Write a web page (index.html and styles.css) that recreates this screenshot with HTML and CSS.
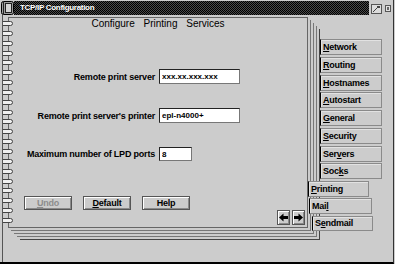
FILE: index.html
```html
<!DOCTYPE html>
<html lang="en">
<head>
<meta charset="UTF-8">
<meta name="viewport" content="width=device-width, initial-scale=1.0">
<title>TCP/IP Configuration</title>
<link rel="stylesheet" href="styles.css">
</head>
<body>

<div class="window">

<div class="titlebar">
<svg class="sysicon" width="13" height="14" viewBox="0 0 13 14">
<rect x="0.5" y="0.5" width="12" height="13" rx="2" fill="#9c9c9c" stroke="#000"/>
<rect x="4.5" y="2.5" width="6" height="9" fill="#d4d4d4" stroke="#222"/>
<line x1="2.5" y1="1" x2="2.5" y2="13" stroke="#222"/>
</svg>
<div class="caption">TCP/IP Configuration</div>
<div class="winbtns">
<svg width="11" height="10" viewBox="0 0 11 10">
<rect x="0.5" y="0.5" width="10" height="9" fill="#dcdcdc" stroke="#555"/>
<line x1="2" y1="8" x2="8" y2="2" stroke="#444"/>
<rect x="6" y="2" width="3" height="2" fill="#444"/>
</svg>
<svg width="6" height="7" viewBox="0 0 6 7">
<rect x="0.5" y="0.5" width="5" height="6" fill="#e0e0e0" stroke="#555"/>
<rect x="2" y="2" width="2" height="3" fill="#666"/>
</svg>
</div>
</div>

<div class="client">

<div class="rings">
<svg class="ring" width="10" height="5" viewBox="0 0 10 5"><path d="M0 0.5H7.5Q9.5 0.5 9.5 2.5Q9.5 4.5 7.5 4.5H0" fill="#f0f0f0" stroke="#444"/></svg>
<svg class="ring" width="10" height="5" viewBox="0 0 10 5"><path d="M0 0.5H7.5Q9.5 0.5 9.5 2.5Q9.5 4.5 7.5 4.5H0" fill="#f0f0f0" stroke="#444"/></svg>
<svg class="ring" width="10" height="5" viewBox="0 0 10 5"><path d="M0 0.5H7.5Q9.5 0.5 9.5 2.5Q9.5 4.5 7.5 4.5H0" fill="#f0f0f0" stroke="#444"/></svg>
<svg class="ring" width="10" height="5" viewBox="0 0 10 5"><path d="M0 0.5H7.5Q9.5 0.5 9.5 2.5Q9.5 4.5 7.5 4.5H0" fill="#f0f0f0" stroke="#444"/></svg>
<svg class="ring" width="10" height="5" viewBox="0 0 10 5"><path d="M0 0.5H7.5Q9.5 0.5 9.5 2.5Q9.5 4.5 7.5 4.5H0" fill="#f0f0f0" stroke="#444"/></svg>
<svg class="ring" width="10" height="5" viewBox="0 0 10 5"><path d="M0 0.5H7.5Q9.5 0.5 9.5 2.5Q9.5 4.5 7.5 4.5H0" fill="#f0f0f0" stroke="#444"/></svg>
<svg class="ring" width="10" height="5" viewBox="0 0 10 5"><path d="M0 0.5H7.5Q9.5 0.5 9.5 2.5Q9.5 4.5 7.5 4.5H0" fill="#f0f0f0" stroke="#444"/></svg>
<svg class="ring" width="10" height="5" viewBox="0 0 10 5"><path d="M0 0.5H7.5Q9.5 0.5 9.5 2.5Q9.5 4.5 7.5 4.5H0" fill="#f0f0f0" stroke="#444"/></svg>
<svg class="ring" width="10" height="5" viewBox="0 0 10 5"><path d="M0 0.5H7.5Q9.5 0.5 9.5 2.5Q9.5 4.5 7.5 4.5H0" fill="#f0f0f0" stroke="#444"/></svg>
<svg class="ring" width="10" height="5" viewBox="0 0 10 5"><path d="M0 0.5H7.5Q9.5 0.5 9.5 2.5Q9.5 4.5 7.5 4.5H0" fill="#f0f0f0" stroke="#444"/></svg>
<svg class="ring" width="10" height="5" viewBox="0 0 10 5"><path d="M0 0.5H7.5Q9.5 0.5 9.5 2.5Q9.5 4.5 7.5 4.5H0" fill="#f0f0f0" stroke="#444"/></svg>
<svg class="ring" width="10" height="5" viewBox="0 0 10 5"><path d="M0 0.5H7.5Q9.5 0.5 9.5 2.5Q9.5 4.5 7.5 4.5H0" fill="#f0f0f0" stroke="#444"/></svg>
<svg class="ring" width="10" height="5" viewBox="0 0 10 5"><path d="M0 0.5H7.5Q9.5 0.5 9.5 2.5Q9.5 4.5 7.5 4.5H0" fill="#f0f0f0" stroke="#444"/></svg>
<svg class="ring" width="10" height="5" viewBox="0 0 10 5"><path d="M0 0.5H7.5Q9.5 0.5 9.5 2.5Q9.5 4.5 7.5 4.5H0" fill="#f0f0f0" stroke="#444"/></svg>
<svg class="ring" width="10" height="5" viewBox="0 0 10 5"><path d="M0 0.5H7.5Q9.5 0.5 9.5 2.5Q9.5 4.5 7.5 4.5H0" fill="#f0f0f0" stroke="#444"/></svg>
<svg class="ring" width="10" height="5" viewBox="0 0 10 5"><path d="M0 0.5H7.5Q9.5 0.5 9.5 2.5Q9.5 4.5 7.5 4.5H0" fill="#f0f0f0" stroke="#444"/></svg>
<svg class="ring" width="10" height="5" viewBox="0 0 10 5"><path d="M0 0.5H7.5Q9.5 0.5 9.5 2.5Q9.5 4.5 7.5 4.5H0" fill="#f0f0f0" stroke="#444"/></svg>
<svg class="ring" width="10" height="5" viewBox="0 0 10 5"><path d="M0 0.5H7.5Q9.5 0.5 9.5 2.5Q9.5 4.5 7.5 4.5H0" fill="#f0f0f0" stroke="#444"/></svg>
<svg class="ring" width="10" height="5" viewBox="0 0 10 5"><path d="M0 0.5H7.5Q9.5 0.5 9.5 2.5Q9.5 4.5 7.5 4.5H0" fill="#f0f0f0" stroke="#444"/></svg>
<svg class="ring" width="10" height="5" viewBox="0 0 10 5"><path d="M0 0.5H7.5Q9.5 0.5 9.5 2.5Q9.5 4.5 7.5 4.5H0" fill="#f0f0f0" stroke="#444"/></svg>
<svg class="ring" width="10" height="5" viewBox="0 0 10 5"><path d="M0 0.5H7.5Q9.5 0.5 9.5 2.5Q9.5 4.5 7.5 4.5H0" fill="#f0f0f0" stroke="#444"/></svg>
</div>

<div class="page">

<div class="pagetitle">Configure Printing Services</div>

<div class="form">
<label for="server">Remote print server</label>
<input class="field" id="server" value="xxx.xx.xxx.xxx" readonly>

<label for="printer">Remote print server's printer</label>
<input class="field" id="printer" value="epl-n4000+" readonly>

<label for="ports">Maximum number of LPD ports</label>
<input class="field short" id="ports" value="8" readonly>
</div>

<div class="buttons">
<div class="btn disabled"><u>U</u>ndo</div>
<div class="btn"><u>D</u>efault</div>
<div class="btn">Help</div>
</div>

<div class="arrows">
<div class="arrow">
<svg width="9" height="9" viewBox="0 0 9 9"><path d="M0 4.5L4.5 0.5V3H9V6H4.5V8.5Z" fill="#000"/></svg>
</div>
<div class="arrow">
<svg width="9" height="9" viewBox="0 0 9 9"><path d="M9 4.5L4.5 0.5V3H0V6H4.5V8.5Z" fill="#000"/></svg>
</div>
</div>

</div>

<div class="tabs">
<div class="tab"><span><u>N</u>etwork</span></div>
<div class="tab"><span><u>R</u>outing</span></div>
<div class="tab"><span><u>H</u>ostnames</span></div>
<div class="tab"><span><u>A</u>utostart</span></div>
<div class="tab"><span><u>G</u>eneral</span></div>
<div class="tab"><span><u>S</u>ecurity</span></div>
<div class="tab"><span>Ser<u>v</u>ers</span></div>
<div class="tab"><span>Soc<u>k</u>s</span></div>
<div class="tab back printing"><span><u>P</u>rinting</span></div>
<div class="tab back mail"><span>Mai<u>l</u></span></div>
<div class="tab back sendmail"><span>S<u>e</u>ndmail</span></div>
</div>

</div>

</div>

</body>
</html>
```

FILE: styles.css
```css
body{
margin:0;
background:#cccccc;
font-family:"Liberation Sans", Arial, sans-serif;
color:#000;
}

.window{
width:394px;
height:264px;
box-sizing:border-box;
border-right:1px solid #333;
border-bottom:2px solid #000;
display:flex;
flex-direction:column;
}

/* title bar */

.titlebar{
display:flex;
height:14px;
margin:1px 0 0 1px;
}

.sysicon{
display:block;
}

.caption{
flex:1;
background:repeating-conic-gradient(#000 0 25%, #4a4a4a 0 50%) 0 0/2px 2px;
color:#fff;
font-weight:bold;
font-size:8px;
letter-spacing:-0.3px;
line-height:14px;
padding-left:6px;
white-space:nowrap;
}

.winbtns{
width:24px;
box-sizing:border-box;
display:flex;
align-items:flex-start;
gap:3px;
padding:3px 0 0 2px;
}

.winbtns svg{
display:block;
}

.winbtns svg + svg{
margin-top:1px;
}

/* notebook */

.client{
flex:1;
display:flex;
align-items:flex-start;
margin-left:2px;
border-left:1px solid #555;
}

.rings{
position:relative;
z-index:1;
width:5px;
height:202px;
margin-top:6px;
display:flex;
flex-direction:column;
justify-content:space-between;
}

.ring{
display:block;
flex-shrink:0;
}

.page{
width:300px;
height:211px;
margin-top:2px;
box-sizing:border-box;
border:1px solid #666;
display:flex;
flex-direction:column;
flex-shrink:0;
box-shadow:
2px 2px 0 #ccc, 3px 3px 0 #777,
5px 5px 0 #ccc, 6px 6px 0 #777,
8px 8px 0 #ccc, 9px 9px 0 #777,
11px 11px 0 #ccc, 12px 12px 0 #444;
}

.pagetitle{
height:12px;
line-height:12px;
font-size:10px;
word-spacing:6px;
text-align:center;
}

.form{
display:grid;
grid-template-columns:146px auto;
column-gap:4px;
row-gap:24px;
margin-top:39px;
align-items:center;
justify-content:start;
}

.form label{
font-size:9px;
letter-spacing:-0.2px;
font-weight:bold;
text-align:right;
white-space:nowrap;
}

.field{
width:81px;
height:15px;
box-sizing:border-box;
margin:0;
padding:0 2px;
border:1px solid #777;
border-top-color:#222;
border-left-color:#222;
border-radius:0;
background:#fff;
font-family:"Liberation Sans", Arial, sans-serif;
font-size:8px;
font-weight:bold;
color:#000;
outline:none;
}

.short{
width:33px;
height:14px;
}

.buttons{
display:flex;
gap:11px;
margin:35px 0 0 15px;
}

.btn{
width:48px;
height:14px;
box-sizing:border-box;
border:1px solid #555;
box-shadow:inset 1px 1px #fff, inset -1px -1px #8a8a8a;
display:flex;
align-items:center;
justify-content:center;
font-size:9px;
letter-spacing:-0.2px;
font-weight:bold;
}

.disabled{
color:#8c8c8c;
}

.arrows{
display:flex;
justify-content:flex-end;
gap:2px;
padding-right:2px;
}

.arrow{
width:13px;
height:15px;
box-sizing:border-box;
border:1px solid #555;
box-shadow:inset 1px 1px #fff, inset -1px -1px #8a8a8a;
display:flex;
align-items:center;
justify-content:center;
}

.arrow svg{
display:block;
}

/* tabs */

.tabs{
display:flex;
flex-direction:column;
align-items:flex-start;
gap:1.75px;
margin:24px 0 0 12px;
}

.tab{
width:62px;
height:16px;
box-sizing:border-box;
border:1px solid #8a8a8a;
border-left-color:#000;
box-shadow:inset 1px 1px #e2e2e2;
background:#cccccc;
display:flex;
align-items:center;
padding-left:2px;
font-size:9px;
letter-spacing:-0.25px;
font-weight:bold;
white-space:nowrap;
}

.back{
height:15.5px;
}

.printing{
width:61px;
margin-left:-12px;
}

.mail{
width:63px;
margin-left:-11px;
}

.sendmail{
width:61px;
margin-left:-8px;
}

u{
text-underline-offset:1px;
}
```
